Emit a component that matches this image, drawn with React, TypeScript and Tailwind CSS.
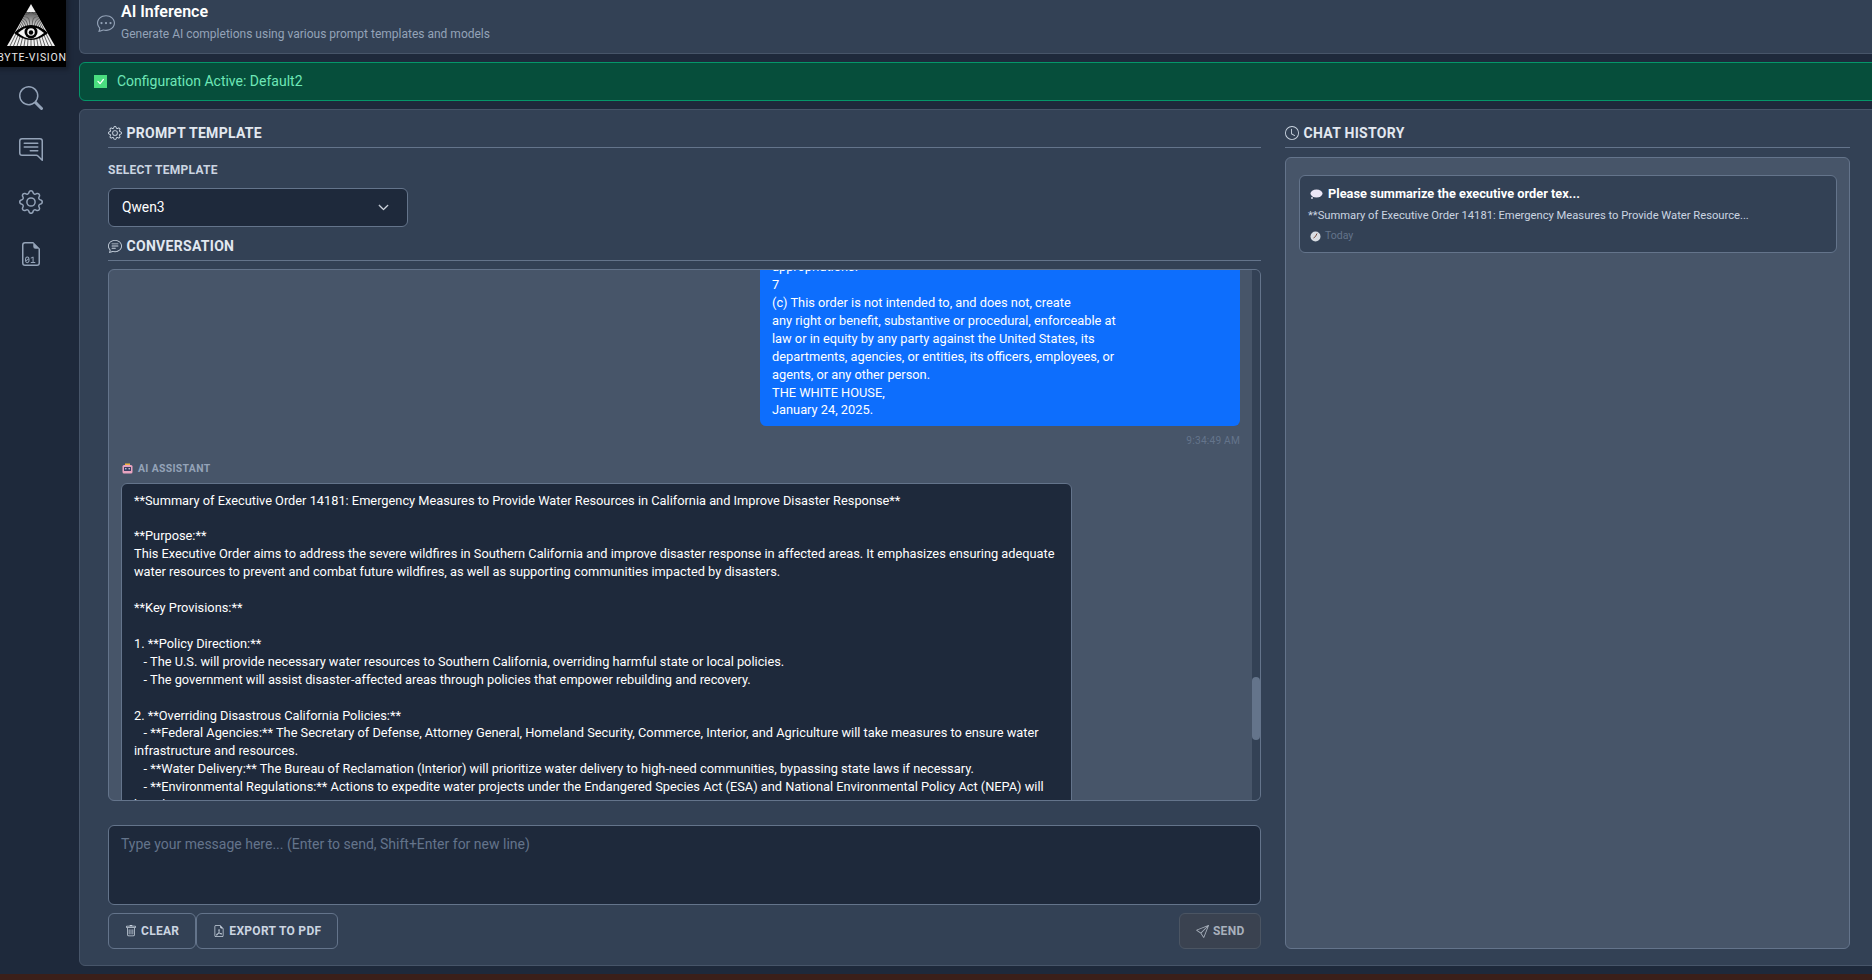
import type { ReactNode } from 'react';
import {
  BsChatDots,
  BsChatLeftText,
  BsChevronDown,
  BsClock,
  BsFileEarmarkBinary,
  BsFileEarmarkPdf,
  BsGear,
  BsSearch,
  BsSend,
  BsTrash,
  BsChatText,
  BsCheck,
} from 'react-icons/bs';

const userTail = `appropriations.
7
(c) This order is not intended to, and does not, create
any right or benefit, substantive or procedural, enforceable at
law or in equity by any party against the United States, its
departments, agencies, or entities, its officers, employees, or
agents, or any other person.
THE WHITE HOUSE,
January 24, 2025.`;

const assistantText = `**Summary of Executive Order 14181: Emergency Measures to Provide Water Resources in California and Improve Disaster Response**

**Purpose:**
This Executive Order aims to address the severe wildfires in Southern California and improve disaster response in affected areas. It emphasizes ensuring adequate water resources to prevent and combat future wildfires, as well as supporting communities impacted by disasters.

**Key Provisions:**

1. **Policy Direction:**
   - The U.S. will provide necessary water resources to Southern California, overriding harmful state or local policies.
   - The government will assist disaster-affected areas through policies that empower rebuilding and recovery.

2. **Overriding Disastrous California Policies:**
   - **Federal Agencies:** The Secretary of Defense, Attorney General, Homeland Security, Commerce, Interior, and Agriculture will take measures to ensure water infrastructure and resources.
   - **Water Delivery:** The Bureau of Reclamation (Interior) will prioritize water delivery to high-need communities, bypassing state laws if necessary.
   - **Environmental Regulations:** Actions to expedite water projects under the Endangered Species Act (ESA) and National Environmental Policy Act (NEPA) will be taken.`;

function Logo() {
  const rays = [];
  for (let i = 0; i < 13; i++) {
    const x = 10 + i * 3.5;
    rays.push(<line key={i} x1={31 + (x - 31) * 0.2} y1={12} x2={x} y2={46} stroke="#000" strokeWidth="0.6" />);
  }
  return (
    <div className="w-[66px] h-[67px] bg-black shadow-[0_0_4px_3px_rgba(0,0,0,0.25)] flex flex-col items-center relative shrink-0">
      <svg width="66" height="50" viewBox="0 0 66 50" className="shrink-0">
        <polygon points="31,4 7,46 55,46" fill="#f1f1f1" />
        {rays}
        <path d="M14 33 Q31 17 48 33 Q31 47 14 33Z" fill="#000" />
        <path d="M18 33 Q31 21 44 33 Q31 44 18 33Z" fill="#f4f4f4" />
        <circle cx="31" cy="32" r="6.5" fill="#000" />
        <circle cx="31" cy="32" r="3.8" fill="#f4f4f4" />
        <circle cx="31" cy="32.5" r="2.2" fill="#000" />
      </svg>
      <div className="absolute left-[-3px] top-[51px] w-[70px] text-center text-[10.5px] leading-[13px] tracking-[0.75px] text-[#e8e8e8] whitespace-nowrap">
        BYTE-VISION
      </div>
    </div>
  );
}

function BsChatLeftTextFlipped() {
  return (
    <span className="-scale-x-100 inline-flex">
      <BsChatLeftText size={24} />
    </span>
  );
}

function Sidebar() {
  return (
    <aside className="w-[79px] shrink-0 flex flex-col">
      <Logo />
      <nav className="w-[62px] flex flex-col items-center gap-[28px] pt-[19px] text-[#94a3b8]">
        <BsSearch size={24} />
        <BsChatLeftTextFlipped />
        <BsGear size={24} />
        <BsFileEarmarkBinary size={24} />
      </nav>
    </aside>
  );
}

function SectionTitle({ icon, children }: { icon: ReactNode; children: ReactNode }) {
  return (
    <div className="flex items-center gap-[4.5px] h-[24px] border-b border-[#64748b] pb-[2px] box-content text-[#e2e8f0]">
      <span className="w-[14px] flex justify-center text-[#cbd5e1]">{icon}</span>
      <h2 className="text-[14px] font-bold uppercase tracking-[0.3px]">{children}</h2>
    </div>
  );
}

function ActionButton({ icon, label }: { icon: ReactNode; label: string }) {
  return (
    <button className="h-[36px] px-[16px] flex items-center gap-[4px] rounded-[6px] border border-[#64748b] text-[12px] font-bold tracking-[0.3px] text-[#cbd5e1] bg-transparent">
      {icon}
      {label}
    </button>
  );
}

function RobotEmoji() {
  return (
    <svg width="11" height="11" viewBox="0 0 11 11" className="ml-[1px]">
      <rect x="3" y="0.5" width="5" height="2" fill="#f2b33d" />
      <rect x="0.5" y="2" width="10" height="8.5" rx="1.5" fill="#e9a3c0" />
      <rect x="2" y="4" width="7" height="4" fill="#3b3f63" />
      <circle cx="3.8" cy="5.8" r="0.8" fill="#cfd8f0" />
      <circle cx="7.2" cy="5.8" r="0.8" fill="#cfd8f0" />
    </svg>
  );
}

function ConversationPanel() {
  return (
    <div className="relative mt-[8px] h-[532px] rounded-[6px] border border-[#64748b] bg-[#475569] overflow-hidden">
      <div className="absolute right-0 top-0 bottom-0 w-[8px] bg-[#334155]">
        <div className="absolute top-[407px] h-[63px] w-full rounded-[4px] bg-[#64748b]" />
      </div>
      <div className="-mt-[11.9px] pl-[12px] pr-[20px]">
        <div className="flex justify-end">
          <div className="w-[480px] rounded-b-[6px] rounded-tr-none bg-[#0d6efd] px-[12px] pb-[7px] text-[12.8px] leading-[17.92px] text-white whitespace-pre-wrap">
            {userTail}
          </div>
        </div>
        <div className="mt-[8px] text-right text-[10.2px] leading-[14px] tracking-[0.2px] text-[#64748b]">9:34:49 AM</div>
        <div className="mt-[13.5px] flex items-center gap-[5px] text-[10.4px] font-bold tracking-[0.35px] leading-[14px] text-[#94a3b8]">
          <RobotEmoji />
          AI ASSISTANT
        </div>
        <div className="mt-[7px] w-[951px] rounded-t-[6px] border border-[#64748b] bg-[#1e293b] px-[12px] pt-[7.6px] pb-[8px] text-[12.8px] leading-[17.92px] text-white whitespace-pre-wrap">
          {assistantText}
        </div>
      </div>
    </div>
  );
}

function HistoryCard() {
  return (
    <div className="h-[78px] rounded-[6px] border border-[#64748b] bg-[#334155] px-[8px] pt-[9px]">
      <div className="flex items-center gap-[5px] pl-[2px] text-[12.8px] font-bold leading-[18px] text-white">
        <svg width="13" height="10" viewBox="0 0 13 10">
          <ellipse cx="6.5" cy="4.5" rx="6" ry="4" fill="#ece6f5" />
          <circle cx="2" cy="9" r="0.9" fill="#ece6f5" />
        </svg>
        Please summarize the executive order tex...
      </div>
      <div className="mt-[5px] text-[11.2px] leading-[16px] text-[#cbd5e1]">
        **Summary of Executive Order 14181: Emergency Measures to Provide Water Resource...
      </div>
      <div className="mt-[5px] flex items-center gap-[4px] pl-[2px] text-[10.5px] leading-[14px] text-[#64748b]">
        <svg width="11" height="11" viewBox="0 0 11 11">
          <circle cx="5.5" cy="5.5" r="5" fill="#d9dde3" />
          <path d="M5.5 5.5 L7 2.5" stroke="#7a4a3a" strokeWidth="1" />
          <path d="M5.5 5.5 L3.5 7" stroke="#7a4a3a" strokeWidth="1" />
        </svg>
        Today
      </div>
    </div>
  );
}

export default function App() {
  return (
    <div className="w-[1872px] h-[980px] overflow-hidden bg-[#1e293b] flex flex-col font-['Roboto',sans-serif]">
      <div className="flex h-[974px] min-h-0">
        <Sidebar />
        <main className="w-[1793px] shrink-0 overflow-hidden">
          <div className="w-[1840px] flex flex-col">
            <header className="h-[54px] rounded-b-[6px] border-b border-l border-[#475569] bg-[#334155] flex items-start pl-[17px]">
              <BsChatDots size={18} className="mt-[14px] text-[#94a3b8] shrink-0" />
              <div className="ml-[6px] pt-[1px]">
                <h1 className="text-[16px] font-semibold leading-[22px] text-white">AI Inference</h1>
                <p className="mt-[2px] text-[12px] leading-[18px] text-[#94a3b8]">
                  Generate AI completions using various prompt templates and models
                </p>
              </div>
            </header>
            <div className="mt-[8px] h-[39px] rounded-[6px] border border-[#059669] bg-[#064e3b] flex items-center pl-[14px] gap-[10px]">
              <span className="w-[13px] h-[13px] bg-[#4ade80] flex items-center justify-center text-white">
                <BsCheck size={13} />
              </span>
              <span className="text-[14px] text-[#6ee7b7]">Configuration Active: Default2</span>
            </div>
            <section className="mt-[8px] h-[857px] w-[1800px] rounded-[6px] border border-[#475569] bg-[#334155] pl-[28px] pt-[11px] flex gap-[24px]">
              <div className="w-[1153px] shrink-0">
                <SectionTitle icon={<BsGear size={14} />}>Prompt Template</SectionTitle>
                <label className="block mt-[14px] text-[12px] font-bold leading-[16px] tracking-[0.3px] text-[#cbd5e1]">
                  SELECT TEMPLATE
                </label>
                <div className="mt-[10px] w-[300px] h-[39px] rounded-[6px] border border-[#64748b] bg-[#1e293b] flex items-center justify-between pl-[13px] pr-[12px] text-white">
                  <span className="text-[13.8px]">Qwen3</span>
                  <BsChevronDown size={11} className="mr-[6px] text-[#e2e8f0] stroke-1" />
                </div>
                <div className="mt-[7px]">
                  <SectionTitle icon={<BsChatText size={14} />}>Conversation</SectionTitle>
                </div>
                <ConversationPanel />
                <div className="mt-[24px] h-[80px] rounded-[6px] border border-[#64748b] bg-[#1e293b] px-[12px] py-[9px] text-[14px] leading-[18px] text-[#64748b]">
                  Type your message here... (Enter to send, Shift+Enter for new line)
                </div>
                <div className="mt-[8px] flex justify-between">
                  <div className="flex">
                    <ActionButton icon={<BsTrash size={12} />} label="CLEAR" />
                    <ActionButton icon={<BsFileEarmarkPdf size={12} />} label="EXPORT TO PDF" />
                  </div>
                  <button className="h-[36px] px-[15.5px] flex items-center gap-[4px] rounded-[6px] border border-[#4b5563] bg-[#3a4250] text-[12px] font-bold tracking-[0.3px] text-[#a8b0bc]">
                    <BsSend size={13} />
                    SEND
                  </button>
                </div>
              </div>
              <div className="w-[565px] shrink-0">
                <SectionTitle icon={<BsClock size={14} />}>Chat History</SectionTitle>
                <div className="mt-[9px] h-[792px] rounded-[6px] border border-[#64748b] bg-[#475569] pl-[13px] pr-[12px] pt-[17px]">
                  <HistoryCard />
                </div>
              </div>
            </section>
          </div>
        </main>
      </div>
      <div className="h-[6px] bg-[#3b1f19] shrink-0" />
    </div>
  );
}
